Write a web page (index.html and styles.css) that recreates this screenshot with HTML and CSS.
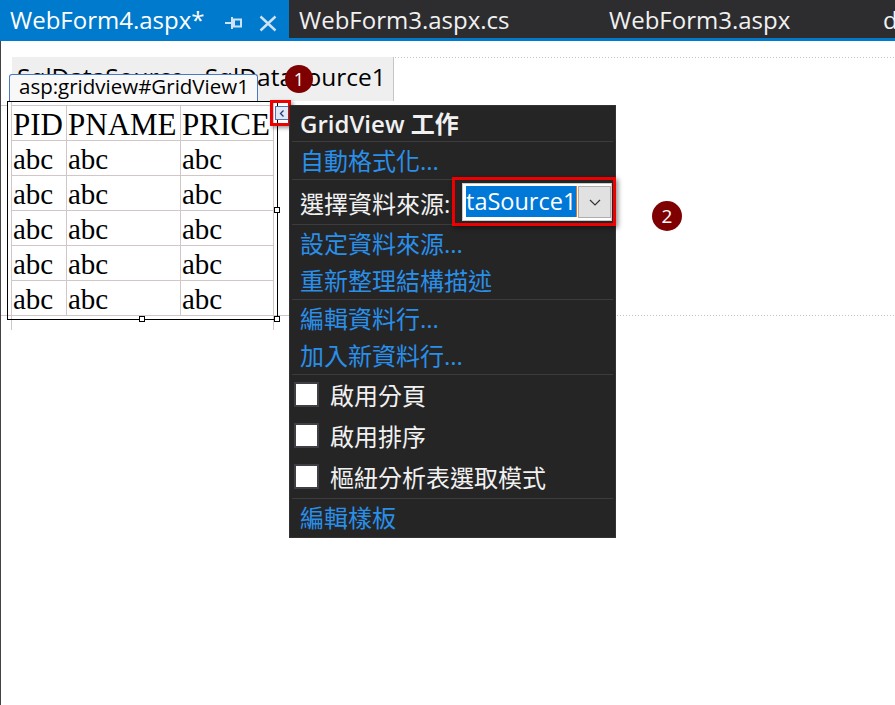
FILE: index.html
```html
<!DOCTYPE html>
<html lang="zh-Hant">
<head>
<meta charset="utf-8">
<title>WebForm4.aspx</title>
<link rel="stylesheet" href="styles.css">
</head>
<body>
<div class="tabbar">
  <div class="tab active">
    <span class="tab-title">WebForm4.aspx*</span>
    <svg class="pin" width="18" height="14" viewBox="0 0 18 14"><rect x="0" y="6" width="6.5" height="2" fill="#cfe3f5"/><rect x="6" y="1" width="2" height="12" fill="#cfe3f5"/><rect x="9" y="3.5" width="7" height="7" fill="none" stroke="#cfe3f5" stroke-width="2"/></svg>
    <svg class="close" width="18" height="17" viewBox="0 0 18 17"><path d="M1.5 1.5 L16.5 15.5 M16.5 1.5 L1.5 15.5" stroke="#cfe3f5" stroke-width="2.4" fill="none"/></svg>
  </div>
  <div class="tab t2"><span class="tab-title">WebForm3.aspx.cs</span></div>
  <div class="tab t3"><span class="tab-title">WebForm3.aspx</span></div>
  <div class="tab t4"><span class="tab-title">default.aspx</span></div>
</div>

<div class="design">
  <div class="row1">
    <div class="sds">SqlDataSource - SqlDataSource1</div>
    <div class="fill-top"></div>
  </div>
  <div class="row2">
    <div class="gv-wrap">
      <div class="ext ext-v1"></div>
      <div class="ext ext-v2"></div>
      <div class="ext ext-h1"></div>
      <div class="ext ext-h2"></div>
      <div class="gv-label">asp:gridview#GridView1</div>
      <div class="gv">
        <div class="grid">
          <div class="cell th">PID</div><div class="cell th">PNAME</div><div class="cell th">PRICE</div>
          <div class="cell">abc</div><div class="cell">abc</div><div class="cell">abc</div>
          <div class="cell">abc</div><div class="cell">abc</div><div class="cell">abc</div>
          <div class="cell">abc</div><div class="cell">abc</div><div class="cell">abc</div>
          <div class="cell">abc</div><div class="cell">abc</div><div class="cell">abc</div>
          <div class="cell">abc</div><div class="cell">abc</div><div class="cell">abc</div>
        </div>
      </div>
      <div class="handle h-right"></div>
      <div class="handle h-bottom"></div>
      <div class="handle h-corner"></div>
      <div class="smart"><svg width="12" height="11" viewBox="0 0 12 11"><path d="M7.5 2.5 L4.5 5.5 L7.5 8.5" stroke="#1f3a78" stroke-width="1.3" fill="none"/></svg></div>
      <div class="smart-hl"></div>

      <div class="menu">
        <div class="menu-sec"><div class="menu-title">GridView 工作</div></div>
        <div class="menu-sec"><div class="link">自動格式化...</div></div>
        <div class="menu-sec">
          <div class="combo-row">
            <span class="combo-label">選擇資料來源:</span>
            <div class="combo">
              <span class="sel">taSource1</span><span class="caret"></span>
              <span class="drop"><svg width="12" height="7" viewBox="0 0 12 7"><path d="M1 1 L6 6 L11 1" stroke="#333" stroke-width="1.2" fill="none"/></svg></span>
              <div class="hl"></div>
            </div>
          </div>
        </div>
        <div class="menu-sec">
          <div class="link">設定資料來源...</div>
          <div class="link">重新整理結構描述</div>
        </div>
        <div class="menu-sec">
          <div class="link">編輯資料行...</div>
          <div class="link">加入新資料行...</div>
        </div>
        <div class="menu-sec">
          <div class="check-row"><span class="box"></span>啟用分頁</div>
          <div class="check-row"><span class="box"></span>啟用排序</div>
          <div class="check-row"><span class="box"></span>樞紐分析表選取模式</div>
        </div>
        <div class="menu-sec"><div class="link last">編輯樣板</div></div>
      </div>

      <div class="badge b1">1</div>
      <div class="badge b2">2</div>
    </div>
    <div class="fill-bottom"></div>
  </div>
</div>
</body>
</html>
```

FILE: styles.css
```css
* { box-sizing: border-box; }

body {
  margin: 0;
  width: 895px;
  height: 705px;
  overflow: hidden;
  background: #ffffff;
  font-family: "Open Sans", "Noto Sans CJK TC", sans-serif;
}

/* ---------- tab bar ---------- */
.tabbar {
  display: flex;
  height: 41px;
  background: #2d2d30;
  border-bottom: 3px solid #007acc;
}
.tab {
  display: flex;
  align-items: flex-start;
  flex: none;
  padding-left: 10px;
  color: #f1f1f1;
  font-size: 24px;
  white-space: nowrap;
  overflow: hidden;
}
.tab-title {
  padding-top: 2px;
  line-height: 36px;
}
.tab.active {
  width: 289px;
  background: #007acc;
  color: #ffffff;
}
.tab.t2 { width: 310px; }
.tab.t3 { width: 274px; }
.tab.t4 { flex: 1; }
.pin {
  margin-left: auto;
  margin-top: 16px;
}
.close {
  margin-left: 16px;
  margin-top: 15px;
  margin-right: 12px;
}

/* ---------- design surface ---------- */
.design {
  height: 664px;
  border-left: 1px solid #434346;
}
.row1 {
  display: flex;
  padding-top: 16px;
}
.sds {
  flex: none;
  margin-left: 11px;
  width: 382px;
  height: 44px;
  padding: 1px 0 0 5px;
  background: #efefef;
  border-right: 1px solid #c6c6c6;
  font-size: 24.5px;
  line-height: 38px;
  color: #000;
  white-space: nowrap;
  overflow: hidden;
}
.fill-top {
  flex: 1;
  margin-left: 1px;
  height: 1px;
  background: repeating-linear-gradient(to right, #c4c4c4 0 1px, transparent 1px 3px);
}
.row2 {
  display: flex;
}
.fill-bottom {
  flex: 1;
  height: 215px;
  background: repeating-linear-gradient(to right, #c4c4c4 0 1px, transparent 1px 3px) bottom left / 100% 1px no-repeat;
}

/* ---------- gridview ---------- */
.gv-wrap {
  position: relative;
  flex: none;
  margin-left: 6px;
}
.gv {
  position: relative;
  border: 1px solid #000;
  padding: 3px;
}
.grid {
  display: grid;
  grid-template-columns: 54px 113px 92px;
  grid-auto-rows: 34px;
  gap: 1px;
  width: 263px;
  border: 1px solid #d2c6c6;
  background: #d2c6c6;
  font-family: "Liberation Serif", "Times New Roman", serif;
  color: #000;
}
.cell {
  background: #fff;
  padding-left: 1px;
  font-size: 29px;
  line-height: 36px;
  white-space: nowrap;
  overflow: visible;
}
.cell.th {
  font-size: 31px;
  line-height: 37px;
}
.ext {
  position: absolute;
  background: #d2c6c6;
}
.ext-v1 { left: 4px; top: -1px; width: 1px; height: 230px; }
.ext-v2 { left: 266px; top: -1px; width: 1px; height: 230px; }
.ext-h1 { left: -6px; top: 4px; width: 6px; height: 1px; }
.ext-h2 { left: -6px; top: 214px; width: 290px; height: 1px; }

.gv-label {
  position: absolute;
  left: 2px;
  bottom: 100%;
  width: 249px;
  padding: 0 0 3px 9px;
  background: #f8f8f8;
  border: 1px solid #4a78c2;
  border-bottom: 0;
  border-radius: 3px 3px 0 0;
  font-size: 20.5px;
  line-height: 23px;
  color: #000;
  white-space: nowrap;
}
.handle {
  position: absolute;
  width: 6px;
  height: 6px;
  background: #fff;
  border: 1px solid #000;
}
.h-right { left: 267px; top: 106px; }
.h-bottom { left: 132px; top: 215px; }
.h-corner { left: 267px; top: 215px; }

.smart {
  position: absolute;
  left: 268px;
  top: 5px;
  width: 14px;
  height: 14px;
  display: flex;
  align-items: center;
  justify-content: center;
  background: #e2e9f5;
  border: 1px solid #5272b2;
}
.smart-hl {
  position: absolute;
  left: 263px;
  top: -1px;
  width: 21px;
  height: 26px;
  border: 3px solid #ee0000;
  box-shadow: 2px 2px 4px rgba(0, 0, 0, 0.4);
}

/* ---------- smart tag panel ---------- */
.menu {
  position: absolute;
  left: 282px;
  top: 4px;
  width: 327px;
  background: #252526;
  border: 1px solid #333337;
  color: #f1f1f1;
  font-size: 24px;
}
.menu-sec {
  margin: 0 2px;
  border-top: 1px solid #3c3c3f;
}
.menu-sec:first-child { border-top: 0; }
.menu-title {
  height: 35px;
  line-height: 35px;
  padding-left: 8px;
  font-weight: 600;
  white-space: nowrap;
}
.link {
  height: 37px;
  line-height: 37px;
  padding-left: 8px;
  color: #2a8fe8;
  white-space: nowrap;
}
.link.last { height: 38px; }
.combo-row {
  display: flex;
  align-items: center;
  height: 44px;
  padding-left: 8px;
}
.combo-label { white-space: nowrap; }
.combo {
  position: relative;
  display: flex;
  align-items: flex-start;
  flex: none;
  margin-left: auto;
  margin-right: 1px;
  width: 150px;
  height: 38px;
  padding: 2px 0 0 3px;
  background: #fff;
  border: 1px solid #cccccc;
}
.sel {
  width: 110px;
  height: 31px;
  line-height: 31px;
  background: #0078d7;
  color: #fff;
  font-size: 23.5px;
  white-space: nowrap;
  overflow: hidden;
}
.caret {
  width: 1px;
  height: 31px;
  background: #e8731e;
}
.drop {
  display: flex;
  align-items: center;
  justify-content: center;
  margin-left: auto;
  width: 33px;
  height: 32px;
  background: #e1e1e1;
  border: 1px solid #adadad;
}
.hl {
  position: absolute;
  left: -11px;
  right: -5px;
  top: -7px;
  bottom: -6px;
  border: 3px solid #ee0000;
  box-shadow: 2px 2px 5px rgba(0, 0, 0, 0.45);
}
.check-row {
  display: flex;
  align-items: center;
  height: 41px;
  padding-left: 2px;
  padding-bottom: 3px;
  white-space: nowrap;
}
.box {
  flex: none;
  width: 25px;
  height: 25px;
  margin-right: 11px;
  background: #fff;
  border: 2px solid #3f3f46;
}

/* ---------- annotation badges ---------- */
.badge {
  position: absolute;
  display: flex;
  align-items: center;
  justify-content: center;
  border-radius: 50%;
  background: #7f0000;
  color: #fff;
  font-size: 18px;
}
.b1 { left: 278px; top: -36px; width: 28px; height: 28px; }
.b2 { left: 645px; top: 100px; width: 30px; height: 30px; font-size: 19px; }
```
